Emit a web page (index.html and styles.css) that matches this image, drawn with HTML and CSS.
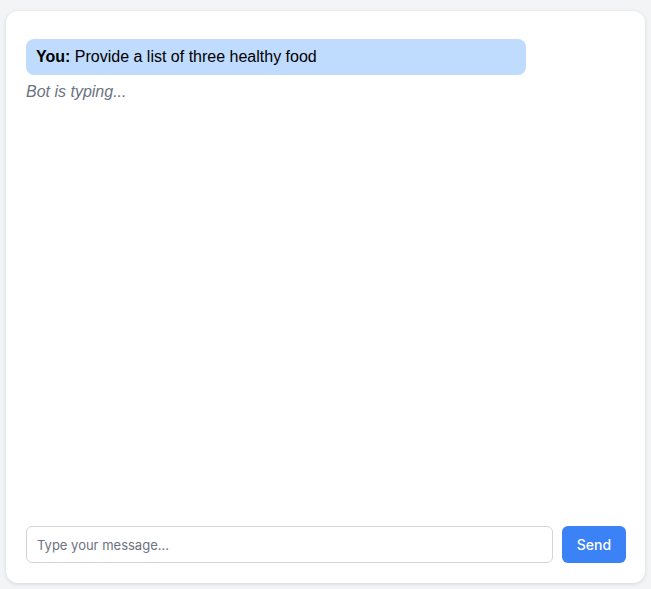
FILE: index.html
```html
<!DOCTYPE html>
<html>
<head>
<meta charset="utf-8">
<link rel="stylesheet" href="styles.css">
</head>
<body>
<div class="card">
  <div class="messages">
    <div class="bubble user"><b>You:</b> Provide a list of three healthy food</div>
    <div class="typing">Bot is typing...</div>
  </div>
  <form class="composer" onsubmit="return false">
    <input class="input" type="text" placeholder="Type your message...">
    <button class="send" type="submit">Send</button>
  </form>
</div>
</body>
</html>
```

FILE: styles.css
```css
html, body {
  margin: 0;
  height: 100%;
}
body {
  background: #f3f4f6;
  padding: 11px 6px 6px;
  box-sizing: border-box;
  display: flex;
  font-family: "Liberation Sans", Arial, sans-serif;
}
.card {
  flex: 1;
  background: #fff;
  border-radius: 12px;
  box-shadow: 0 1px 4px rgba(0,0,0,0.12);
  padding: 28px 19px 20px 20px;
  display: flex;
  flex-direction: column;
}
.messages {
  flex: 1;
  display: flex;
  flex-direction: column;
  align-items: flex-start;
  gap: 7px;
}
.bubble {
  width: 500px;
  box-sizing: border-box;
  background: #bfdbfe;
  border-radius: 8px;
  padding: 8px 10px;
  font-size: 16px;
  line-height: 20px;
  color: #000;
}
.typing {
  font-style: italic;
  color: #6b7280;
  font-size: 16px;
  line-height: 20px;
}
.composer {
  display: flex;
  gap: 9px;
  margin: 0;
}
.input {
  flex: 1;
  height: 37px;
  box-sizing: border-box;
  border: 1px solid #d1d5db;
  border-radius: 6px;
  padding: 0 10px;
  font-family: Inter, "Noto Sans", sans-serif;
  font-size: 13px;
  outline: none;
}
.input::placeholder {
  color: #6b7280;
}
.send {
  width: 64px;
  height: 37px;
  border: none;
  border-radius: 6px;
  background: #3b82f6;
  color: #fff;
  font-family: Inter, "Noto Sans", sans-serif;
  font-size: 14px;
  font-weight: 500;
}
```
